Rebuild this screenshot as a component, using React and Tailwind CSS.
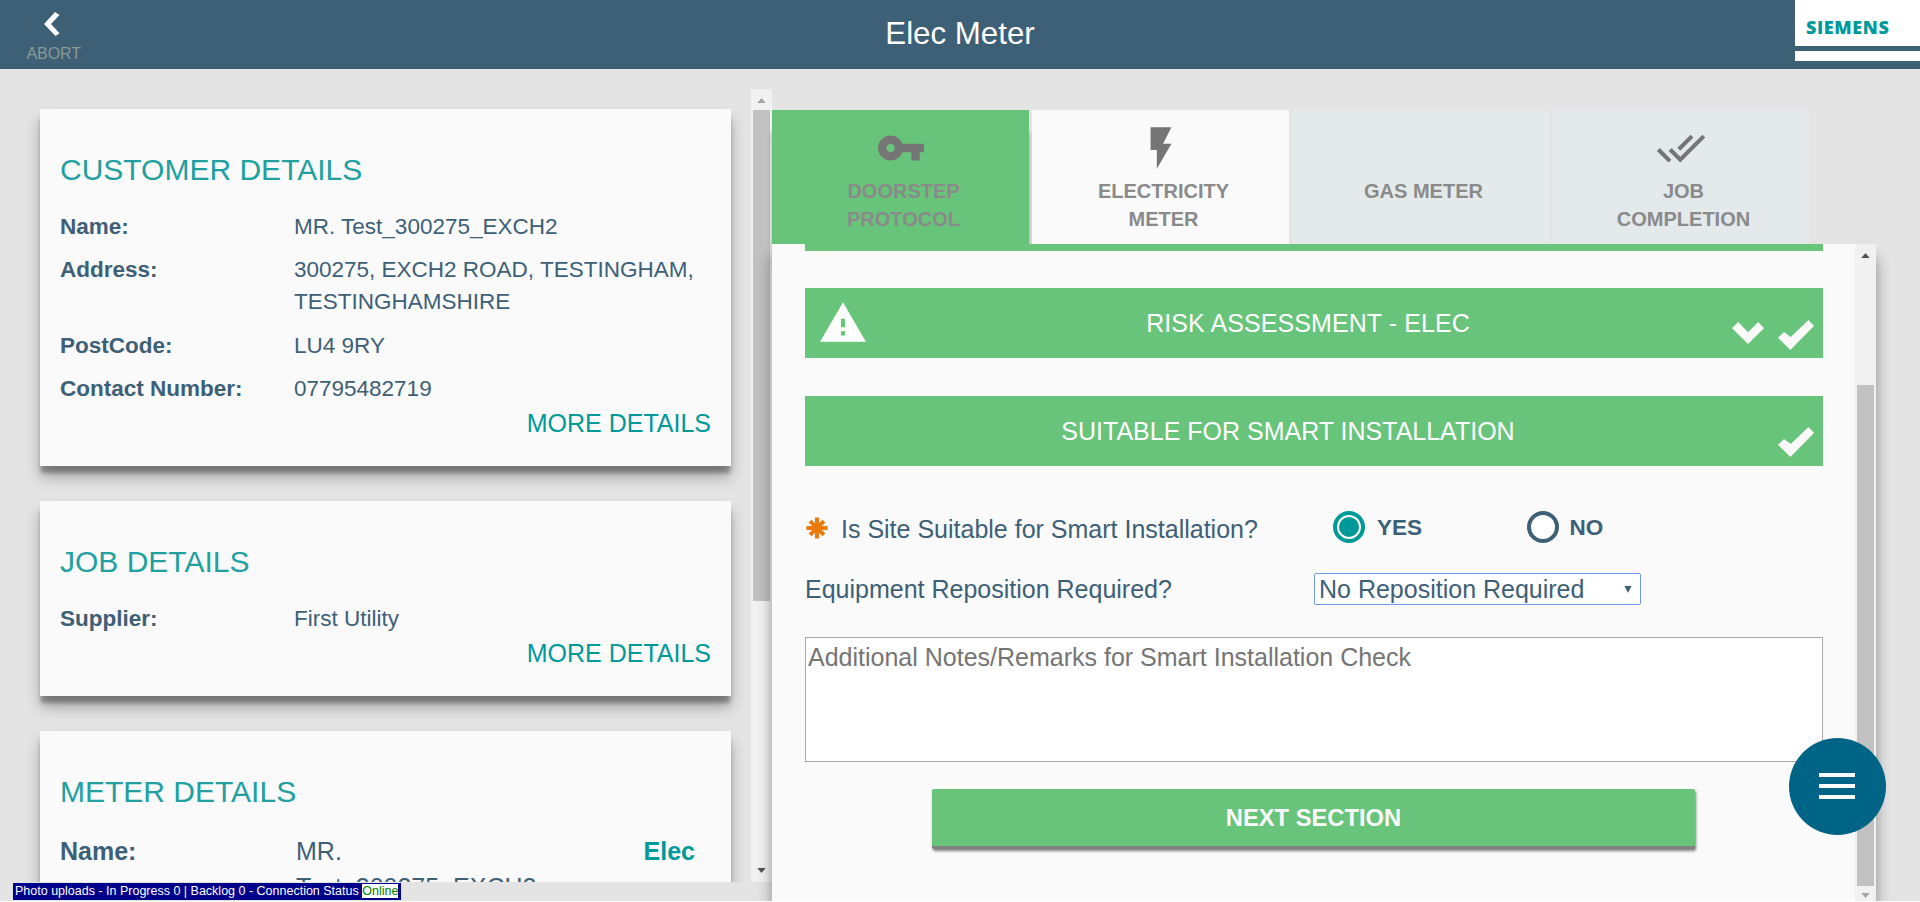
import { MdVpnKey, MdFlashOn, MdDoneAll, MdWarning } from "react-icons/md";

const CARD_SHADOW =
  "shadow-[0_8px_4px_-1px_rgba(0,0,0,0.3),0_11px_14px_rgba(0,0,0,0.28)]";

function Card({ title, children, className = "" }) {
  return (
    <section
      className={`w-[691px] shrink-0 bg-[#fafafa] pl-5 pr-5 pt-[41px] ${CARD_SHADOW} ${className}`}
    >
      <h2 className="mb-[21px] h-10 text-[30px] leading-10 text-[#21a09f]">{title}</h2>
      {children}
    </section>
  );
}

function Row({ label, children, className = "" }) {
  return (
    <div className={`flex text-[22.5px] leading-8 text-[#3d6077] ${className}`}>
      <div className="w-[234px] shrink-0 font-bold">{label}</div>
      <div className="whitespace-pre-line">{children}</div>
    </div>
  );
}

function MoreDetails() {
  return (
    <div className="mt-0.5 text-right text-[25px] leading-8 text-[#009999]">
      MORE DETAILS
    </div>
  );
}

function Arrow({ up, className }) {
  return (
    <svg viewBox="0 0 10 6" className={`h-[5px] w-[9px] ${className}`}>
      <path d={up ? "M0 6L5 0L10 6Z" : "M0 0L10 0L5 6Z"} fill="currentColor" />
    </svg>
  );
}

function Tab({ className, icon, children }) {
  return (
    <div className={`flex h-[134px] w-[257px] flex-col items-center ${className}`}>
      <div className="mt-[13px] h-[50px] text-[50px] text-[#757575]">{icon}</div>
      <div className="mt-[4px] pl-[6px] text-center text-[20px] font-bold leading-7 text-[#8a8a8a]">
        {children}
      </div>
    </div>
  );
}

function Check() {
  return (
    <svg viewBox="0 0 36 30" className="h-[30px] w-9">
      <path d="M0 17.7L6 12L12.7 17L30.5 0L36 6L12.3 30Z" fill="#fafafa" />
    </svg>
  );
}

function ChevronDown() {
  return (
    <svg viewBox="0 0 32 22" className="h-[22px] w-8">
      <path d="M0 6.2L6.2 0L16 10.2L26.2 0L32 6.2L16 22Z" fill="#fafafa" />
    </svg>
  );
}

function SectionBar({ title, warning, chevron }) {
  return (
    <div className="flex h-[70px] bg-[#68c47a] text-white">
      <div className="w-[62px] shrink-0 pl-[13px] pt-[10px] text-[50px]">
        {warning && <MdWarning />}
      </div>
      <div
        className={`flex-1 text-center text-[25px] leading-[70px] ${chevron ? "pl-px tracking-[0.08px]" : "-ml-[62px]"}`}
      >
        {title}
      </div>
      <div
        className={`flex shrink-0 justify-end pr-[9px] ${chevron ? "w-[75px] pt-8" : "w-[52px] pt-[31px]"}`}
      >
        <div className="flex items-start gap-[14px]">
          {chevron && (
            <div className="pt-[2px]">
              <ChevronDown />
            </div>
          )}
          <Check />
        </div>
      </div>
    </div>
  );
}

export default function App() {
  return (
    <div className="relative flex h-[902px] w-[1920px] flex-col overflow-hidden bg-white font-['Liberation_Sans',Arial,sans-serif]">
      <header className="flex h-[69px] shrink-0 justify-between bg-[#3d6077]">
        <div className="w-[125px] pl-[26.5px] pt-3">
          <svg viewBox="0 0 16 24" className="ml-[17px] h-6 w-4">
            <path d="M0 12L11 0L15.5 3L7 12L15.5 21.3L11.5 24Z" fill="#fff" />
          </svg>
          <div className="mt-2 text-[16px] leading-5 tracking-[-0.1px] text-[#8a9a94]">
            ABORT
          </div>
        </div>
        <h1 className="text-[31.25px] leading-[67px] text-white">Elec Meter</h1>
        <div className="w-[125px]">
          <div className="h-[46px] bg-white pl-[11px] font-['Open_Sans',sans-serif] text-[18px] font-extrabold leading-[54px] tracking-[0.6px] text-[#009999]">
            SIEMENS
          </div>
          <div className="mt-[5px] h-[10px] bg-white" />
        </div>
      </header>

      <div className="flex h-[832px] shrink-0 overflow-hidden bg-[#e4e4e4]">
        <div className="w-[772px] shrink-0 pt-5">
          <div className="flex h-[793px]">
            <div className="flex w-[751px] flex-col gap-[35px] overflow-hidden pl-10 pt-5">
              <Card title="CUSTOMER DETAILS" className="h-[357px]">
                <div className="flex flex-col gap-[11.3px]">
                  <Row label="Name:">MR. Test_300275_EXCH2</Row>
                  <Row label="Address:">
                    {"300275, EXCH2 ROAD, TESTINGHAM,\nTESTINGHAMSHIRE"}
                  </Row>
                  <Row label="PostCode:">LU4 9RY</Row>
                  <Row label="Contact Number:">07795482719</Row>
                </div>
                <MoreDetails />
              </Card>
              <Card title="JOB DETAILS" className="h-[195px]">
                <Row label="Supplier:">First Utility</Row>
                <MoreDetails />
              </Card>
              <Card title="METER DETAILS" className="h-[300px]">
                <div className="flex text-[25px] leading-9 text-[#3d6077]">
                  <div className="w-[236px] shrink-0 font-bold">Name:</div>
                  <div className="flex-1 whitespace-pre-line">
                    {"MR.\nTest_300275_EXCH2"}
                  </div>
                  <div className="pr-4 font-bold text-[#009999]">Elec</div>
                </div>
              </Card>
            </div>
            <div className="flex w-[21px] flex-col items-center bg-[#f1f1f1]">
              <Arrow up className="mt-[9px] text-[#a3a3a3]" />
              <div className="mt-[7px] h-[491px] w-[17px] bg-[#c1c1c1]" />
              <Arrow className="mb-[9px] mt-auto text-[#505050]" />
            </div>
          </div>
          <div className="ml-[13px] mt-px flex h-[17px] w-[388px] items-start bg-[#00008b] pl-[2px] pt-px text-[12.5px] leading-[14px] text-white">
            <span className="whitespace-pre">
              Photo uploads - In Progress 0 | Backlog 0 - Connection Status{" "}
            </span>
            <span className="bg-white text-[#008000]">Online</span>
          </div>
        </div>

        <main className="flex w-[1104px] flex-col pt-[41px]">
          <nav className="flex gap-[3px]">
            <Tab
              className="bg-[#68c47a] shadow-[0_22px_5px_rgba(0,0,0,0.3)]"
              icon={<MdVpnKey />}
            >
              DOORSTEP
              <br />
              PROTOCOL
            </Tab>
            <Tab className="bg-[#fafafa]" icon={<MdFlashOn />}>
              ELECTRICITY
              <br />
              METER
            </Tab>
            <Tab className="bg-[#e4eaea]">GAS METER</Tab>
            <Tab className="bg-[#e4e9ec]" icon={<MdDoneAll />}>
              JOB
              <br />
              COMPLETION
            </Tab>
          </nav>

          <div className="relative flex h-[657px] bg-[#fafafa] shadow-[0_14px_14px_rgba(0,0,0,0.4)]">
            <div className="w-[1083px] pl-[33px] pr-8 text-[25px] text-[#3d6077]">
              <div className="h-[7px] bg-[#68c47a]" />
              <div className="mt-[37px]">
                <SectionBar title="RISK ASSESSMENT - ELEC" warning chevron />
              </div>
              <div className="mt-[38px]">
                <SectionBar title="SUITABLE FOR SMART INSTALLATION" />
              </div>

              <div className="mt-[45px] flex h-8 items-center">
                <svg viewBox="-11 -11 22 22" className="ml-[0.5px] mt-[2px] h-[22px] w-[22px]">
                  <g stroke="#ec7a08" strokeWidth="4">
                    <path d="M0 -10.6V10.6M-10.6 0H10.6M-6.9 -6.9L6.9 6.9M-6.9 6.9L6.9 -6.9" />
                  </g>
                </svg>
                <span className="ml-[13.5px] mt-[4px] w-[492px] shrink-0 leading-8">
                  Is Site Suitable for Smart Installation?
                </span>
                <span className="flex h-8 w-8 shrink-0 items-center justify-center rounded-full border-4 border-[#009999] bg-white">
                  <span className="h-5 w-5 rounded-full bg-[#009999]" />
                </span>
                <span className="ml-3 mt-[2px] w-[149.5px] text-[22.5px] font-bold">YES</span>
                <span className="h-8 w-8 shrink-0 rounded-full border-4 border-[#3d6077] bg-white" />
                <span className="ml-[11px] mt-[2px] text-[22.5px] font-bold">NO</span>
              </div>

              <div className="mt-[30px] flex h-8 items-center">
                <span className="w-[509px] leading-8">Equipment Reposition Required?</span>
                <div className="flex h-8 w-[327px] items-center justify-between rounded-[2px] border-[1.5px] border-[#6b9cf0] bg-white pl-[4px] pr-[8px]">
                  <span className="pt-[2px]">No Reposition Required</span>
                  <svg viewBox="0 0 8 7" className="h-[7px] w-2">
                    <path d="M0.5 0H7.5L4 7Z" fill="#3d6077" />
                  </svg>
                </div>
              </div>

              <div className="mt-8 h-[125px] border border-[#a9a9a9] bg-white pl-[2px] pt-[3px] leading-8 text-[#757575]">
                Additional Notes/Remarks for Smart Installation Check
              </div>

              <div className="ml-[127px] mt-[27px] h-[60px] w-[763px] rounded-[2px] border-b-[3px] border-[#808080] bg-[#68c47a] text-center text-[23.75px] font-bold leading-[58px] text-[#fafafa] shadow-[1px_2px_3px_rgba(0,0,0,0.5)]">
                NEXT SECTION
              </div>
            </div>

            <div className="flex w-[21px] flex-col items-center bg-[#f1f1f1]">
              <Arrow up className="mt-[9px] text-[#505050]" />
              <div className="mt-[127px] h-[501px] w-[17px] bg-[#c1c1c1]" />
              <Arrow className="mb-[3px] mt-auto text-[#a3a3a3]" />
            </div>
          </div>
        </main>
      </div>

      <button className="absolute left-[1788.5px] top-[737.5px] flex h-[97px] w-[97px] flex-col items-center justify-center gap-[6.5px] rounded-full bg-[#006487]">
        <span className="h-[4.5px] w-9 bg-white" />
        <span className="h-[4.5px] w-9 bg-white" />
        <span className="h-[4.5px] w-9 bg-white" />
      </button>
    </div>
  );
}
